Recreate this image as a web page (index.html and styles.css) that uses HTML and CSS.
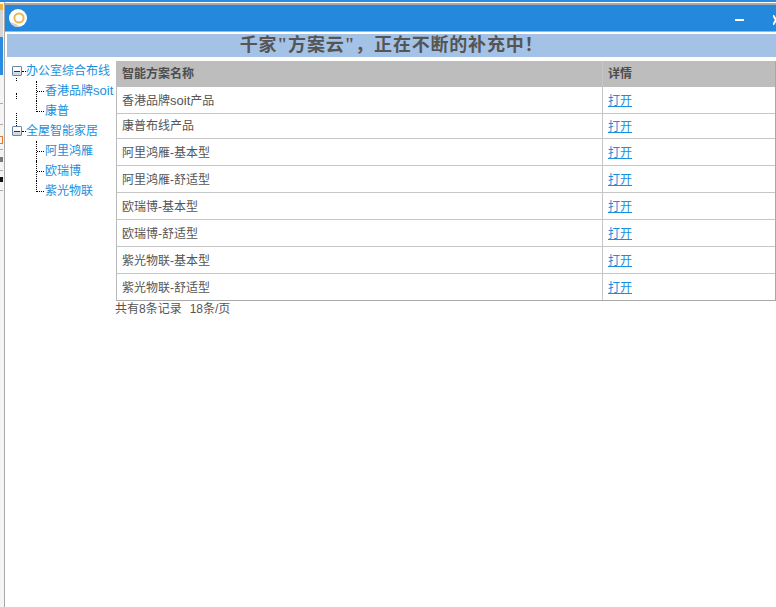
FILE: index.html
```html
<!DOCTYPE html>
<html lang="zh-CN">
<head>
<meta charset="utf-8">
<title>千家方案云</title>
<link rel="stylesheet" href="styles.css">
</head>
<body>
<div class="topstrip"></div>
<div class="desk">
  <div class="edge">
    <span class="frag frag-orange"></span>
    <span class="frag frag-light"></span>
    <span class="frag frag-blue"></span>
    <span class="frag frag-line l1"></span>
    <span class="frag frag-line l2"></span>
    <span class="frag frag-box"></span>
    <span class="frag frag-line l3"></span>
    <span class="frag frag-mid"></span>
    <span class="frag frag-line l4"></span>
    <span class="frag frag-black"></span>
    <span class="frag frag-line l5"></span>
  </div>
  <div class="window">
    <div class="titlebar">
      <svg class="logo" width="18" height="18" viewBox="0 0 18 18">
        <circle cx="9" cy="9" r="9" fill="#fff"/>
        <path d="M1 13a9 9 0 0 0 10 5l-4-3z" fill="#cfcfcf"/>
        <circle cx="10" cy="9" r="4.6" fill="none" stroke="#e9b850" stroke-width="2"/>
      </svg>
      <span class="spacer"></span>
      <span class="min"></span>
      <svg class="close" width="3" height="10" viewBox="0 0 3 10">
        <path d="M0 0l3 5M3 5l-3 5" stroke="#fff" stroke-width="2" fill="none"/>
      </svg>
    </div>
    <div class="banner">千家"方案云"，正在不断的补充中！</div>
    <div class="content">
      <nav class="tree">
        <div class="parent"><span class="box"></span><span class="dash"></span><a class="tlink">办公室综合布线</a></div>
        <div class="group group-a">
          <div class="guide">
            <span class="seg seg1"></span><span class="seg seg2"></span><span class="seg seg3"></span>
          </div>
          <div class="kids">
            <div class="kid"><span class="elbow"></span><a class="tlink">香港品牌<span class="latin">soit</span></a></div>
            <div class="kid"><span class="elbow last"></span><a class="tlink">康普</a></div>
          </div>
        </div>
        <div class="parent"><span class="box"></span><span class="dash"></span><a class="tlink">全屋智能家居</a></div>
        <div class="group">
          <div class="guide"></div>
          <div class="kids">
            <div class="kid"><span class="elbow"></span><a class="tlink">阿里鸿雁</a></div>
            <div class="kid"><span class="elbow"></span><a class="tlink">欧瑞博</a></div>
            <div class="kid"><span class="elbow last"></span><a class="tlink">紫光物联</a></div>
          </div>
        </div>
      </nav>
      <main class="main">
        <div class="table">
          <div class="row head"><div class="c1">智能方案名称</div><div class="c2">详情</div></div>
          <div class="row tall"><div class="c1"><span>香港品牌<span class="latin">soit</span>产品</span></div><div class="c2"><a class="open">打开</a></div></div>
          <div class="row short"><div class="c1">康普布线产品</div><div class="c2"><a class="open">打开</a></div></div>
          <div class="row tall"><div class="c1">阿里鸿雁-基本型</div><div class="c2"><a class="open">打开</a></div></div>
          <div class="row tall"><div class="c1">阿里鸿雁-舒适型</div><div class="c2"><a class="open">打开</a></div></div>
          <div class="row tall"><div class="c1">欧瑞博-基本型</div><div class="c2"><a class="open">打开</a></div></div>
          <div class="row tall"><div class="c1">欧瑞博-舒适型</div><div class="c2"><a class="open">打开</a></div></div>
          <div class="row tall"><div class="c1">紫光物联-基本型</div><div class="c2"><a class="open">打开</a></div></div>
          <div class="row final"><div class="c1">紫光物联-舒适型</div><div class="c2"><a class="open">打开</a></div></div>
        </div>
        <div class="pager"><span>共有8条记录</span><span>18条/页</span></div>
      </main>
    </div>
  </div>
</div>
</body>
</html>
```

FILE: styles.css
```css
* { box-sizing: border-box; }
html, body { margin: 0; height: 100%; }
body {
  width: 776px;
  height: 607px;
  overflow: hidden;
  background: #fff;
  font-family: "Liberation Sans", "Noto Sans CJK SC", sans-serif;
  font-size: 12px;
  color: #555;
}
.topstrip { height: 2px; background: #2a8be0; }
.desk { display: flex; height: 605px; }
.edge {
  width: 5px;
  flex: none;
  display: flex;
  flex-direction: column;
  background: #f4f4f4;
  border-right: 1px solid #a9a9a9;
}
.frag { display: block; width: 3px; flex: none; }
.frag-orange { height: 6px; margin-top: 2px; background: #f5b335; }
.frag-light { height: 27px; background: #d5d5d5; }
.frag-blue { height: 38px; background: #2a8be0; }
.frag-line { height: 1px; background: #aaa; }
.l1 { margin-top: 28px; }
.l2 { margin-top: 20px; }
.frag-box { height: 8px; margin-top: 11px; border: 1px solid #e8782a; border-left: 0; }
.l3 { margin-top: 5px; }
.frag-mid { height: 5px; margin-top: 7px; background: #777; }
.l4 { margin-top: 8px; }
.frag-black { height: 5px; margin-top: 6px; background: #111; }
.l5 { margin-top: 8px; }

.window { flex: 1; min-width: 0; border-top: 2px solid #a9a9a9; margin-top: 1px; }
.titlebar {
  height: 27px;
  background: #2488dd;
  border-bottom: 1px solid #8fbde6;
  display: flex;
  align-items: center;
  padding-left: 4px;
}
.logo { flex: none; }
.spacer { flex: 1; }
.min {
  width: 9px;
  height: 2px;
  margin-top: 3px;
  background: #fff;
  margin-right: 29px;
}
.close { flex: none; margin-top: 3px; }

.banner {
  height: 23px;
  margin: 2px 0 4px 2px;
  background: #a3c2e6;
  color: #555;
  font-family: "Liberation Serif", "Noto Sans CJK SC", serif;
  font-size: 18px;
  font-weight: 700;
  line-height: 23px;
  text-align: center;
  letter-spacing: 0.8px;
}

.content { display: flex; align-items: flex-start; }
.tree { width: 111px; flex: none; color: #1a8fdc; }
.parent, .kid { display: flex; align-items: center; height: 20px; white-space: nowrap; }
.parent { padding-left: 7px; }
.tlink { color: #1a8fdc; line-height: 20px; }
.latin { font-size: 13px; }
.box {
  width: 10px;
  height: 10px;
  flex: none;
  border: 1px solid #6b86a3;
  border-radius: 1px;
  background:
    linear-gradient(#333, #333) center / 6px 1px no-repeat,
    linear-gradient(#fff 0 3px, #cdd9e6 6px);
}
.dash { width: 4px; flex: none; border-top: 1px dotted #000; }
.group { display: flex; align-items: flex-start; }
.guide { width: 31px; flex: none; height: 20px; padding-left: 11px; }
.seg { display: block; width: 1px; border-left: 1px dotted #000; }
.seg1 { height: 3px; margin-top: -3px; }
.seg2 { height: 6px; margin-top: 12px; }
.seg3 { height: 13px; margin-top: 14px; }
.kids { display: flex; flex-direction: column; }
.elbow {
  width: 9px;
  height: 20px;
  flex: none;
  align-self: flex-start;
  border-left: 1px dotted #000;
  background: linear-gradient(90deg, #000 1px, transparent 1px) 0 10px / 2px 1px repeat-x;
}
.elbow.last { height: 11px; }

.main { flex: 1; min-width: 0; }
.table { border-left: 1px solid #bbb; border-right: 1px solid #a8a8a8; border-bottom: 1px solid #a8a8a8; width: 660px; }
.row { display: flex; border-bottom: 1px solid #c6c6c6; align-items: stretch; }
.row.tall { height: 27px; }
.row.short { height: 25px; }
.row.final { height: 26px; border-bottom: 0; }
.row.head {
  height: 26px;
  background: #bdbdbd;
  font-weight: 700;
  color: #4d4d4d;
  border-bottom: 0;
}
.c1 { width: 485px; padding: 0 0 2px 5px; display: flex; align-items: center; flex: none; }
.c2 { flex: 1; border-left: 1px solid #c6c6c6; padding: 0 0 2px 5px; display: flex; align-items: center; }
.head .c1, .head .c2 { padding-bottom: 4px; }
.short .c1 { padding-bottom: 4px; }
.open { color: #1a8fdc; text-decoration: underline; }
.pager { display: flex; gap: 8px; height: 17px; line-height: 17px; margin-left: -1px; }
```
